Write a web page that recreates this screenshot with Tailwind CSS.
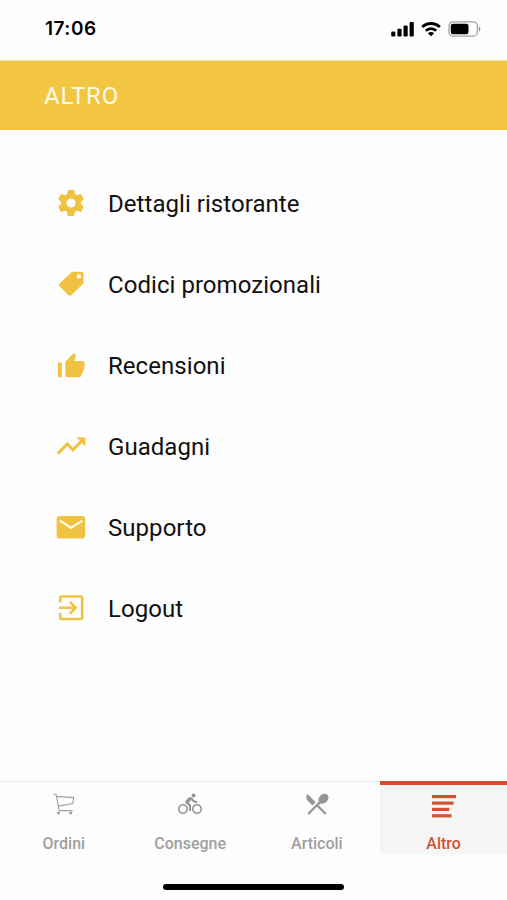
<!DOCTYPE html>
<html lang="it">
  <head>
    <meta charset="UTF-8" />
    <meta name="viewport" content="width=device-width, initial-scale=1.0" />
    <title>Altro</title>
    <script src="https://cdn.jsdelivr.net/npm/@tailwindcss/browser@4"></script>
  </head>
  <body class="bg-[#fdfdfd] font-['Roboto',sans-serif]">
    <div class="flex h-[900px] w-full flex-col overflow-hidden">
      <!-- Status bar -->
      <div class="flex h-[60px] items-center justify-between pr-[26px] pb-[2px] pl-[45px]">
        <span class="font-['Inter',sans-serif] text-[19px] font-semibold tracking-[0.5px] text-black">17:06</span>
        <div class="flex items-center">
          <svg class="h-[16px] w-[24px]" viewBox="0 0 24 16">
            <rect x="0.2" y="10.5" width="4.2" height="5" rx="1.2" />
            <rect x="6.4" y="7.8" width="4.2" height="7.7" rx="1.2" />
            <rect x="12.5" y="4.6" width="4.2" height="10.9" rx="1.2" />
            <rect x="18.6" y="1" width="4.2" height="14.5" rx="1.2" />
          </svg>
          <svg class="ml-[6px] h-[16px] w-[20px]" viewBox="0 0 20 16" fill="none" stroke="#000">
            <path d="M1.2 6.1a12.4 12.4 0 0 1 17.6 0" stroke-width="2.9" />
            <path d="M4.8 9.8a7.4 7.4 0 0 1 10.4 0" stroke-width="2.7" />
            <path d="M6.9 12.3a4.4 4.4 0 0 1 6.2 0L10 15.3z" fill="#000" stroke="none" />
          </svg>
          <svg class="ml-[7px] h-[16px] w-[33px]" viewBox="0 0 33 16">
            <rect x="1" y="0.9" width="28.4" height="14.2" rx="4.2" fill="none" stroke="#a3a3a3" stroke-width="1.3" />
            <rect x="2.8" y="2.8" width="17.7" height="10.4" rx="2.2" />
            <path d="M31 5.5c1.8.6 1.8 4.4 0 5z" fill="#8e8e8e" />
          </svg>
        </div>
      </div>

      <!-- Header -->
      <header class="flex h-[70px] items-center border-t border-[#f8e2a1] bg-[#f2c543] pl-[44px]">
        <h1 class="text-2xl tracking-[0.8px] text-[#fffbe8]">ALTRO</h1>
      </header>

      <!-- Menu -->
      <ul class="flex flex-1 flex-col pt-[33px] pl-[54px] text-2xl tracking-[0.05px] text-[#111111]">
        <li class="flex h-[81px] items-center gap-5">
          <svg class="mb-[2px] h-[34px] w-[34px]" viewBox="0 0 34 34" fill="#f0c242" stroke="#f0c242" stroke-linejoin="round">
            <path stroke-width="1.2" fill-rule="evenodd" d="M14.3 4.6h5.400l.7 3.900 2.700 1.500 3.500-1.400 2.600 4.500-2.900 2.400v3l2.900 2.400-2.600 4.500-3.500-1.400-2.700 1.500-.7 3.900h-5.400l-.7-3.900-2.700-1.500-3.500 1.400-2.600-4.500 2.900-2.400v-3l-2.900-2.400 2.600-4.500 3.500 1.400 2.700-1.500zM17 11.800a5.200 5.200 0 1 0 0 10.400 5.200 5.200 0 0 0 0-10.400z" />
          </svg>
          <span>Dettagli ristorante</span>
        </li>
        <li class="flex h-[81px] items-center gap-5">
          <svg class="mb-[2px] h-[34px] w-[34px] fill-[#f0c242]" viewBox="0 0 34 34">
            <path fill-rule="evenodd" d="M19.2 4.8h8.2c1.2 0 2.1.9 2.1 2.1v8.4c0 .8-.3 1.4-.8 1.9L17.4 28c-.9.9-2 .9-2.9 0l-8.900-8.600c-.9-.9-.9-2 0-2.900L17.2 5.600c.5-.5 1.200-.8 2-.8zM24.900 7.200a2.200 2.200 0 1 0 0 4.400 2.200 2.200 0 0 0 0-4.400z" />
          </svg>
          <span>Codici promozionali</span>
        </li>
        <li class="flex h-[81px] items-center gap-5">
          <svg class="h-[34px] w-[34px] fill-[#f0c242]" viewBox="0 0 34 34">
            <path d="M3.8 13.4h3.2c.5 0 .9.4.9.9v13.1c0 .5-.4.9-.9.9H4.7c-.5 0-.9-.4-.9-.9z" />
            <path d="M11.3 13.8c0-.7.3-1.3.8-1.8l7.7-8.1 1.3 1.2c.5.5.6 1.1.5 1.7l-1.2 5.2h7.9c1.500 0 2.500 1.100 2.400 2.600l-.5 5.100c0 .3-.1.6-.2.9l-2.900 6.200c-.4 1-1.300 1.500-2.300 1.500H13.800c-1.400 0-2.500-1.100-2.500-2.500z" />
          </svg>
          <span>Recensioni</span>
        </li>
        <li class="flex h-[81px] items-center gap-5">
          <svg class="mb-[2px] h-[34px] w-[34px] fill-[#f0c242] stroke-[#f0c242] stroke-[0.2]" viewBox="0 0 24 24">
            <path d="M16 6l2.29 2.29-4.88 4.88-4-4L2 16.59 3.41 18l6-6 4 4 6.3-6.29L22 12V6z" />
          </svg>
          <span>Guadagni</span>
        </li>
        <li class="flex h-[81px] items-center gap-5">
          <svg class="mb-[2px] h-[34px] w-[34px]" viewBox="0 0 34 34">
            <rect x="2.6" y="6" width="28.6" height="22.6" rx="2.800" fill="#f0c242" />
            <path d="M5.800 10.600L17 17.800l11.400-7.200" fill="none" stroke="#fff9e4" stroke-width="2.300" />
          </svg>
          <span>Supporto</span>
        </li>
        <li class="flex h-[81px] items-center gap-5">
          <svg class="mb-[2px] h-[34px] w-[34px]" viewBox="0 0 34 34" fill="none" stroke="#f0c242" stroke-width="2.6">
            <path d="M6.2 11.5V7c0-.9.6-1.5 1.5-1.5h19c.9 0 1.5.6 1.5 1.5v19.500c0 .9-.6 1.500-1.500 1.500h-19c-.9 0-1.500-.6-1.500-1.500V22" />
            <path d="M5 16.8h16.500M15.800 10.800l6 6-6 6" />
          </svg>
          <span>Logout</span>
        </li>
      </ul>

      <!-- Tab bar -->
      <nav class="grid h-[73px] grid-cols-4 text-center text-base font-medium text-[#a0a0a0]">
        <a class="flex flex-col items-center border-t border-[#ececec] pt-[10px]">
          <svg class="ml-[2px] h-6 w-6" viewBox="0 0 24 24" fill="none" stroke="#a0a0a0" stroke-width="1.1">
            <path d="M1.5 1.8l2.7.8 3 16h13.500M4.700 4.400l16.900 1.200-.8 6-14.500 2.500" />
            <circle cx="6.500" cy="21" r="1" fill="#a0a0a0" />
            <circle cx="18.700" cy="21" r="1" fill="#a0a0a0" />
          </svg>
          <span class="mt-[17px] ml-[1px] leading-[21px]">Ordini</span>
        </a>
        <a class="flex flex-col items-center border-t border-[#ececec] pt-[10px]">
          <svg class="h-6 w-6 fill-[#969696]" viewBox="0 0 24 24">
            <path d="M15.5 5.5c1.1 0 2-.9 2-2s-.9-2-2-2-2 .9-2 2 .9 2 2 2zM5 12c-2.8 0-5 2.2-5 5s2.2 5 5 5 5-2.2 5-5-2.200-5-5-5zm0 8.500c-1.900 0-3.500-1.600-3.500-3.500s1.600-3.500 3.500-3.500 3.500 1.600 3.500 3.500-1.600 3.500-3.500 3.500zm5.800-10l2.400-2.400.8.800c1.300 1.300 3 2.100 5.100 2.100V9c-1.500 0-2.700-.6-3.600-1.500l-1.900-1.900c-.5-.4-1-.6-1.600-.6s-1.100.2-1.400.6L7.800 8.400c-.4.4-.6.9-.6 1.400 0 .6.2 1.100.6 1.400L11 14v5h2v-6.200l-2.200-2.300zM19 12c-2.800 0-5 2.200-5 5s2.200 5 5 5 5-2.200 5-5-2.200-5-5-5zm0 8.500c-1.900 0-3.500-1.600-3.500-3.500s1.600-3.500 3.500-3.500 3.500 1.600 3.500 3.500-1.600 3.500-3.500 3.500z" />
          </svg>
          <span class="mt-[17px] leading-[21px]">Consegne</span>
        </a>
        <a class="flex flex-col items-center border-t border-[#ececec] pt-[8px]">
          <svg class="h-[28px] w-[28px] fill-[#969696]" viewBox="0 0 24 24">
            <path d="M8.1 13.34l2.83-2.83L3.91 3.5c-1.56 1.56-1.56 4.09 0 5.66l4.19 4.18zm6.78-1.81c1.53.71 3.68.21 5.27-1.38 1.91-1.91 2.28-4.65.81-6.12-1.46-1.46-4.2-1.1-6.12.81-1.59 1.59-2.09 3.74-1.38 5.27L3.7 19.87l1.41 1.41L12 14.41l6.88 6.88 1.41-1.41L13.41 13l1.47-1.47z" />
          </svg>
          <span class="mt-[15px] leading-[21px]">Articoli</span>
        </a>
        <a class="flex flex-col items-center border-t-4 border-[#d0512f] bg-[#f5f5f5] pt-[8px] text-[#d2532f]">
          <svg class="h-[27px] w-6 fill-[#d0512f]" viewBox="0 0 24 27">
            <rect y="2" width="24" height="3.2" />
            <rect y="8.5" width="21.5" height="3.2" />
            <rect y="14.8" width="17.3" height="3.2" />
            <rect y="21.2" width="19.5" height="3.2" />
          </svg>
          <span class="mt-[13px] leading-[21px]">Altro</span>
        </a>
      </nav>

      <!-- Home indicator -->
      <div class="flex h-[46px] justify-center pt-[30px]">
        <div class="h-[6px] w-[181px] rounded-full bg-black"></div>
      </div>
    </div>
  </body>
</html>
